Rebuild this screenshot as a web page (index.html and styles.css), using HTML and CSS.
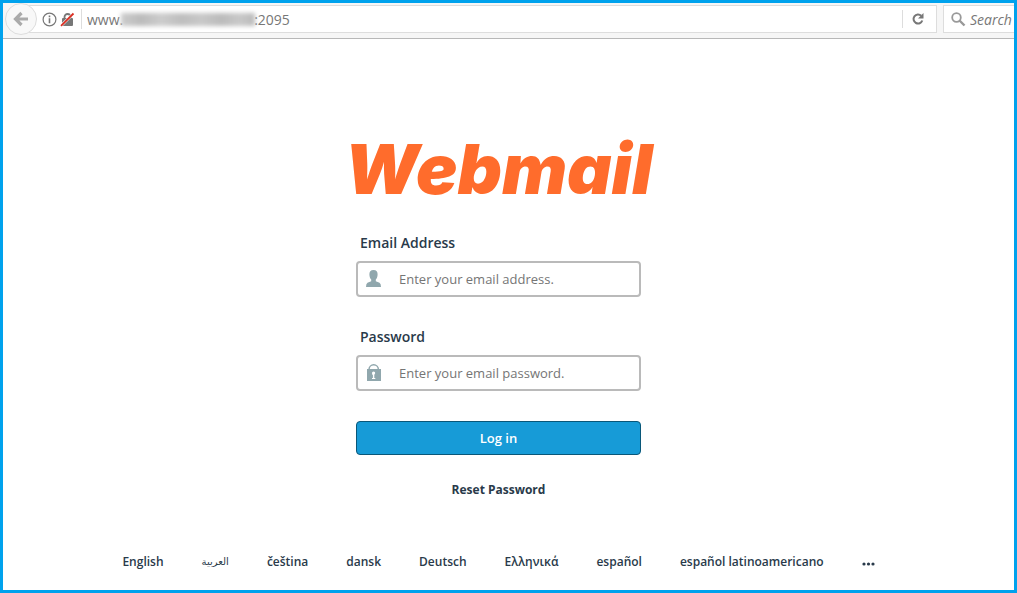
FILE: index.html
```
<!DOCTYPE html>
<html lang="en">
<head>
  <meta charset="UTF-8">
  <meta name="viewport" content="width=device-width, initial-scale=1.0">
  <title>Webmail Login</title>
  <link rel="stylesheet" href="styles.css">
</head>
<body>
  <header class="toolbar">
    <button type="button" class="back" aria-label="Back">
      <svg width="16" height="16" viewBox="0 0 16 16"><path d="M8.500 2 L2.500 8 L8.500 14 M3 8 H15" fill="none" stroke="#aaa" stroke-width="3.200"/></svg>
    </button>
    <div class="urlbar">
      <svg width="15" height="15" viewBox="0 0 15 15"><circle cx="7.500" cy="7.500" r="6.400" fill="none" stroke="#777" stroke-width="1.200"/><path d="M6.700 3.500h1.600v1.700H6.700zM6.700 6.300h1.600v5H6.700z" fill="#777"/></svg>
      <svg width="15" height="15" viewBox="0 0 15 15"><path d="M4.500 7V5a3 3 0 0 1 6 0v2" fill="none" stroke="#777" stroke-width="1.800"/><rect x="2" y="6" width="11" height="8" rx="1" fill="#777"/><path d="M1 13.800 L13.500 1.500" stroke="#fff" stroke-width="2.800"/><path d="M1 13.800 L13.500 1.500" stroke="#d92d21" stroke-width="1.800"/></svg>
      <div class="address">
        <input type="text" class="url" aria-label="Address" value="www.                                    :2095">
        <span class="smear"></span>
      </div>
      <button type="button" class="reload" aria-label="Reload">
        <svg width="14" height="14" viewBox="0 0 14 14"><path d="M10.200 3.800A4.500 4.500 0 1 0 11.300 8.500" fill="none" stroke="#777" stroke-width="2"/><path d="M12.500 1v5.500H7z" fill="#777"/></svg>
      </button>
    </div>
    <div class="searchbar">
      <svg width="15" height="15" viewBox="0 0 15 15"><circle cx="5.500" cy="5.500" r="4.300" fill="none" stroke="#999" stroke-width="1.800"/><path d="M8.500 8.500 L13.500 13.500" stroke="#999" stroke-width="2.400"/></svg>
      <input type="text" class="search" aria-label="Search" placeholder="Search">
    </div>
  </header>

  <main class="page">
    <h1 class="logo">Webmail</h1>
    <form class="login">
      <label for="user">Email Address</label>
      <div class="field">
        <svg width="15" height="18" viewBox="0 0 15 18"><path d="M7.500 0C10.400 0 11.800 1.900 11.600 4.800C11.500 7.200 10.700 8.600 9.800 9.600V11.300L13.500 12.800Q15 13.500 15 17H0Q0 13.500 1.500 12.800L5.200 11.300V9.600C4.300 8.600 3.500 7.200 3.400 4.800C3.200 1.900 4.600 0 7.500 0Z" fill="#90a7ad"/></svg>
        <input type="text" id="user" placeholder="Enter your email address.">
      </div>
      <label for="pass">Password</label>
      <div class="field">
        <svg width="15" height="18" viewBox="0 0 15 18"><path d="M3 7V5.500A4.700 4.700 0 0 1 12.400 5.500V7" fill="none" stroke="#90a7ad" stroke-width="1.500"/><rect x="1" y="5" width="14" height="12" fill="#90a7ad"/><circle cx="7.600" cy="9" r="1.600" fill="#fff"/><path d="M6 9.500H8.300V14H9.300V15H6V14H6.900V10.500H6Z" fill="#fff"/></svg>
        <input type="password" id="pass" placeholder="Enter your email password.">
      </div>
      <button type="submit" class="submit">Log in</button>
      <a href="#" class="reset">Reset Password</a>
    </form>
    <nav class="locales">
      <a href="#">English</a>
      <a href="#" lang="ar" class="arabic">العربية</a>
      <a href="#">čeština</a>
      <a href="#">dansk</a>
      <a href="#">Deutsch</a>
      <a href="#">Ελληνικά</a>
      <a href="#">español</a>
      <a href="#">español latinoamericano</a>
      <a href="#" aria-label="More languages"><svg width="13" height="5" viewBox="0 0 13 5"><g fill="#293a4a"><circle cx="2" cy="3" r="1.600"/><circle cx="6.500" cy="3" r="1.600"/><circle cx="11" cy="3" r="1.600"/></g></svg></a>
    </nav>
  </main>
</body>
</html>
```

FILE: styles.css
```
* { box-sizing: border-box; }
body {
  margin: 0;
  min-height: 100vh;
  border: 3px solid #00a2ed;
  background: #fff;
  color: #293a4a;
  font-family: "Open Sans", "Noto Sans", sans-serif;
  font-size: 12px;
  overflow: hidden;
}
input, button { font-family: inherit; }
svg { flex: none; }
a { color: inherit; text-decoration: none; }

/* browser toolbar */
.toolbar {
  display: flex;
  height: 36px;
  padding-top: 2px;
  background: #f6f6f6;
  border-bottom: 1px solid #b8b8b8;
}
.back {
  position: relative;
  z-index: 1;
  display: flex;
  align-items: center;
  justify-content: center;
  width: 32px;
  height: 32px;
  margin: -2px 0 0 2px;
  padding: 0;
  border: 1px solid #ddd;
  border-radius: 50%;
  background: #f8f8f8;
}
.urlbar, .searchbar {
  display: flex;
  align-items: center;
  height: 28px;
  border: 1px solid #ddd;
  background: #fff;
}
.urlbar {
  flex: 1;
  gap: 3px;
  margin-left: -8px;
  padding-left: 12px;
}
.address {
  position: relative;
  flex: 1;
  margin-left: 3px;
  border-left: 1px solid #ddd;
}
.url {
  display: block;
  width: 100%;
  height: 20px;
  padding: 0 5px;
  border: 0;
  color: #777;
  font-size: 14px;
}
.smear {
  position: absolute;
  left: 39px;
  top: 4px;
  width: 134px;
  height: 13px;
  background: linear-gradient(90deg, #ccc, #bbb 15%, #ccc 30%, #bebebe 45%, #c8c8c8 60%, #bbb 75%, #c8c8c8 88%, #bbb);
  filter: blur(2px);
}
.reload {
  display: flex;
  align-items: center;
  justify-content: center;
  width: 34px;
  height: 18px;
  padding: 0 3px 0 0;
  border: 0;
  border-left: 1px solid #ddd;
  background: none;
}
.searchbar {
  width: 71px;
  margin-left: 6px;
  padding-left: 7px;
  gap: 4px;
  border-right: 0;
}
.search {
  flex: 1;
  min-width: 0;
  padding: 0;
  border: 0;
  font-size: 14px;
  font-style: italic;
}
.search::placeholder { color: #777; }

/* login page */
.page {
  display: flex;
  flex-direction: column;
  align-items: center;
  padding: 94px 20px 0 0;
}
.logo {
  margin: 0;
  color: #ff6c2c;
  font-family: Inter, "Open Sans", sans-serif;
  font-size: 69px;
  font-style: italic;
  font-weight: 900;
  line-height: 72px;
}
.login {
  display: flex;
  flex-direction: column;
  width: 285px;
  margin-top: 28px;
}
.login label {
  padding-left: 4px;
  font-size: 14px;
  font-weight: 600;
  line-height: 20px;
}
.field {
  display: flex;
  align-items: center;
  height: 36px;
  margin: 8px 0 30px;
  padding-left: 8px;
  gap: 18px;
  border: 2px solid #bababa;
  border-radius: 4px;
}
.field input {
  flex: 1;
  min-width: 0;
  padding: 0;
  border: 0;
  outline: 0;
  background: none;
  font-size: 13px;
}
.field input::placeholder { color: #757575; }
.submit {
  height: 34px;
  border: 1px solid #095779;
  border-radius: 4px;
  background: #179bd7;
  color: #fff;
  font-size: 13px;
  font-weight: 600;
}
.reset {
  align-self: center;
  margin-top: 26px;
  font-weight: 700;
  line-height: 18px;
}
.locales {
  display: flex;
  align-items: center;
  gap: 38px;
  margin-top: 54px;
  font-weight: 600;
  line-height: 18px;
  white-space: nowrap;
}
.arabic { font-family: "DejaVu Sans", sans-serif; font-size: 10px; font-weight: 400; }
```
